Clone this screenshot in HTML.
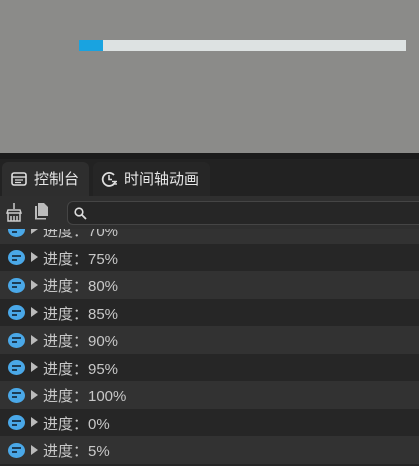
<!DOCTYPE html>
<html><head><meta charset="utf-8"><style>
*{margin:0;padding:0;box-sizing:border-box}
body{width:419px;height:463px;overflow:hidden;background:#262626;font-family:"Liberation Sans","Noto Sans CJK SC",sans-serif;position:relative}
.top{position:absolute;left:0;top:0;width:419px;height:153px;background:#8b8b89}
.track{position:absolute;left:79px;top:40px;width:327px;height:11px;background:#dde2e2}
.fill{position:absolute;left:79px;top:40px;width:24px;height:11px;background:#19a3e0}
.band{position:absolute;left:0;top:153px;width:419px;height:6px;background:#1b1b1b}
.tabs{position:absolute;left:0;top:159px;width:419px;height:37px;background:#222}
.tab{position:absolute;top:3px;height:34px;border-radius:6px 6px 0 0;color:#e6e6e6;font-size:15px;line-height:34px}
.tool{position:absolute;left:0;top:196px;width:419px;height:33px;background:#2f2f2f}
.search{position:absolute;left:67px;top:201px;width:360px;height:24px;border:1px solid #454545;border-radius:6px;background:#262626}
.rows{position:absolute;left:0;top:229px;width:419px}
.row{height:27.5px;position:relative;color:#c8c8c8;font-size:15px;line-height:27.5px}
.row.l{background:#323232}.row.d{background:#262626}
.ic{position:absolute;left:8px;top:6.5px;width:17px;height:15px;border-radius:50%;background:#4aa8e8}
.ic:before{content:"";position:absolute;left:4px;top:4.5px;width:9px;height:2px;background:#1d3c55}
.ic:after{content:"";position:absolute;left:4px;top:8.5px;width:5px;height:2px;background:#1d3c55}
.tri{position:absolute;left:31px;top:8.5px;width:0;height:0;border-left:7px solid #bbb;border-top:5.5px solid transparent;border-bottom:5.5px solid transparent}
.tx{position:absolute;left:43px;top:2px}
.tab span{top:1px}
</style></head><body>
<div class="top"></div><div class="track"></div><div class="fill"></div>
<div class="band"></div>
<div class="tabs">
 <div class="tab" style="left:2px;width:87px;background:#2e2e2e">
  <svg style="position:absolute;left:9px;top:9px" width="16" height="16" viewBox="0 0 16 16"><rect x="1" y="2" width="14" height="12" rx="2" fill="none" stroke="#ddd" stroke-width="1.6"/><line x1="1" y1="6" x2="15" y2="6" stroke="#ddd" stroke-width="1.4"/><line x1="4" y1="9" x2="12" y2="9" stroke="#ddd" stroke-width="1.2"/><line x1="4" y1="11.5" x2="10" y2="11.5" stroke="#ddd" stroke-width="1.2"/></svg>
  <span style="position:absolute;left:32px">控制台</span></div>
 <div class="tab" style="left:93px;width:117px;background:#262626">
  <svg style="position:absolute;left:8px;top:9px" width="17" height="17" viewBox="0 0 17 17"><path d="M13 4A6.5 6.5 0 1 0 14.5 10" fill="none" stroke="#ddd" stroke-width="1.8"/><path d="M8 4v4.5h3" fill="none" stroke="#ddd" stroke-width="1.6"/><line x1="11" y1="10.5" x2="16" y2="10.5" stroke="#ddd" stroke-width="1.4"/><line x1="12" y1="13" x2="16" y2="13" stroke="#ddd" stroke-width="1.4"/></svg>
  <span style="position:absolute;left:31px">时间轴动画</span></div>
</div>
<div class="tool">
 <svg style="position:absolute;left:5px;top:6px" width="18" height="20" viewBox="0 0 18 20"><path d="M9 1v6M3 8h12l1 3H2z M3 11v8h12v-8 M6 14v5 M9 14v5 M12 14v5" fill="none" stroke="#ccc" stroke-width="1.5"/></svg>
 <svg style="position:absolute;left:34px;top:6px" width="15" height="18" viewBox="0 0 15 18"><path d="M4 1h6l4 4v9H4z" fill="#bbb"/><path d="M1 4h2v12h9v1.5H1z" fill="#bbb"/></svg>
</div>
<div class="search"><svg style="position:absolute;left:6px;top:5px" width="13" height="13" viewBox="0 0 13 13"><circle cx="5" cy="5" r="3.8" fill="none" stroke="#ddd" stroke-width="1.6"/><line x1="8" y1="8" x2="12" y2="12" stroke="#ddd" stroke-width="1.8"/></svg></div>
<div class="rows" style="top:229px">
 <div class="row l" style="height:14.5px;overflow:hidden"><div class="ic" style="top:-7px"></div><div class="tri" style="top:-5px"></div><span class="tx" style="top:-11px">进度：70%</span></div>
 <div class="row d"><div class="ic"></div><div class="tri"></div><span class="tx">进度：75%</span></div>
 <div class="row l"><div class="ic"></div><div class="tri"></div><span class="tx">进度：80%</span></div>
 <div class="row d"><div class="ic"></div><div class="tri"></div><span class="tx">进度：85%</span></div>
 <div class="row l"><div class="ic"></div><div class="tri"></div><span class="tx">进度：90%</span></div>
 <div class="row d"><div class="ic"></div><div class="tri"></div><span class="tx">进度：95%</span></div>
 <div class="row l"><div class="ic"></div><div class="tri"></div><span class="tx">进度：100%</span></div>
 <div class="row d"><div class="ic"></div><div class="tri"></div><span class="tx">进度：0%</span></div>
 <div class="row l"><div class="ic"></div><div class="tri"></div><span class="tx">进度：5%</span></div>
</div>
</body></html>
